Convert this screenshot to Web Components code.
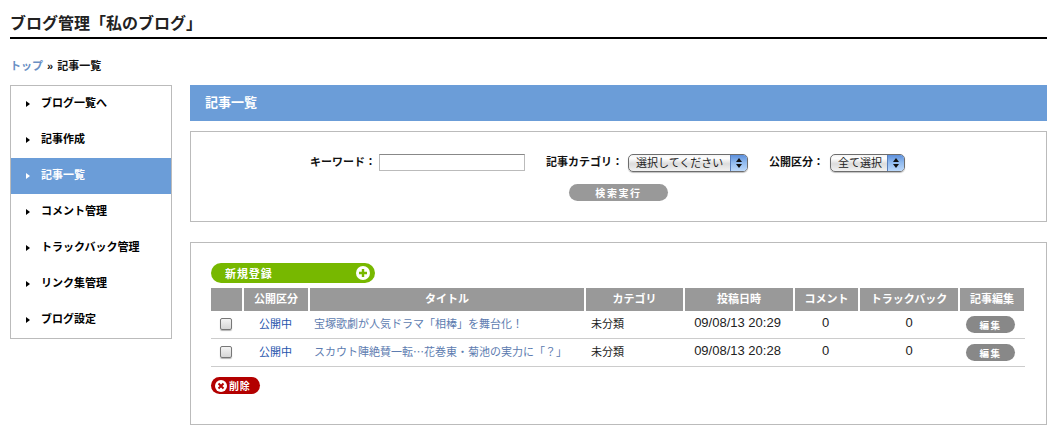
<!DOCTYPE html>
<html lang="ja">
<head>
<meta charset="utf-8">
<title>ブログ管理</title>
<style>
  html, body { margin: 0; padding: 0; background: #fff; }
  body {
    font-family: "Liberation Sans", "Noto Sans CJK JP", sans-serif;
    font-size: 11px;
    color: #111;
  }
</style>
</head>
<body>
<blog-page>
  <page-title slot="title">ブログ管理「私のブログ」</page-title>
  <bread-crumbs slot="crumbs" current="記事一覧"><a>トップ</a></bread-crumbs>
  <side-menu slot="menu">
    <menu-item>ブログ一覧へ</menu-item>
    <menu-item>記事作成</menu-item>
    <menu-item active>記事一覧</menu-item>
    <menu-item>コメント管理</menu-item>
    <menu-item>トラックバック管理</menu-item>
    <menu-item>リンク集管理</menu-item>
    <menu-item>ブログ設定</menu-item>
  </side-menu>
  <section-head>記事一覧</section-head>
  <search-panel></search-panel>
  <article-panel>
    <article-row status="公開中" category="未分類" date="09/08/13 20:29">宝塚歌劇が人気ドラマ「相棒」を舞台化！</article-row>
    <article-row status="公開中" category="未分類" date="09/08/13 20:28">スカウト陣絶賛一転…花巻東・菊池の実力に「？」</article-row>
  </article-panel>
</blog-page>

<script>
  function define(name, css, html) {
    customElements.define(name, class extends HTMLElement {
      constructor() {
        super();
        this.attachShadow({ mode: 'open' }).innerHTML = `<style>:host,*{box-sizing:border-box}${css}</style>${html(this)}`;
      }
    });
  }

  const COLS = '33px 66px 276px 99px 110px 65px 100px 65px';

  define('blog-page', `
    :host { display: block; width: 1057px; padding: 0 10px; }
    .body { display: flex; gap: 18px; margin-top: 12px; align-items: flex-start; }
    .main { flex: 1; min-width: 0; }
  `, () => `
    <slot name="title"></slot>
    <slot name="crumbs"></slot>
    <div class="body">
      <slot name="menu"></slot>
      <div class="main"><slot></slot></div>
    </div>
  `);

  define('page-title', `
    :host {
      display: block; height: 39px; padding-top: 14px;
      border-bottom: 2px solid #000;
      font-size: 16px; font-weight: bold; line-height: 20px; color: #222;
    }
  `, () => `<slot></slot>`);

  define('bread-crumbs', `
    :host { display: block; margin-top: 20px; line-height: 14px; font-weight: bold; height: 14px; }
    ::slotted(a) { color: #6a8fc4; }
    span { margin: 0 1px; }
  `, el => `<slot></slot> <span>»</span> ${el.getAttribute('current')}`);

  define('side-menu', `
    :host { display: block; flex: 0 0 162px; width: 162px; border: 1px solid #bbb; background: #fff; }
  `, () => `<slot></slot>`);

  define('menu-item', `
    :host {
      display: flex; align-items: center; height: 36px; padding-left: 15px;
      font-weight: bold; color: #000;
    }
    :host([active]) { background: #6b9dd8; color: #fff; }
    i {
      width: 0; height: 0; margin-right: 11px;
      border-left: 4px solid currentColor;
      border-top: 3px solid transparent; border-bottom: 3px solid transparent;
    }
    span { padding-bottom: 4px; }
  `, () => `<i></i><span><slot></slot></span>`);

  define('section-head', `
    :host {
      display: flex; align-items: center; height: 36px; padding: 0 0 4px 15px;
      background: #6b9dd8; color: #fff; font-size: 13px; font-weight: bold;
    }
  `, () => `<slot></slot>`);

  define('aqua-select', `
    :host {
      display: inline-flex; height: 18px; border: 1px solid #6d6d6d; border-radius: 5px;
      background: linear-gradient(#f4f4f4 0, #fff 20%, #dcdcdc 55%, #f2f2f2 100%);
      box-shadow: 0 1px 1px rgba(0,0,0,.25);
      overflow: hidden; color: #222; line-height: 16px;
    }
    span { flex: 1; padding-left: 7px; white-space: nowrap; }
    b {
      flex: 0 0 17px; display: flex; flex-direction: column; align-items: center; justify-content: center; gap: 2px;
      background: linear-gradient(#5c8fdc 0, #8fb9ee 45%, #bcd9fb 100%);
      border-left: 1px solid #5a7fbb;
    }
    b i { width: 0; height: 0; border-left: 3px solid transparent; border-right: 3px solid transparent; }
    b i:first-child { border-bottom: 4px solid #111; }
    b i:last-child { border-top: 4px solid #111; }
  `, () => `<span><slot></slot></span><b><i></i><i></i></b>`);

  define('pill-button', `
    :host {
      display: flex; align-items: center; justify-content: center;
      border-radius: 10px; background: var(--bg, #999); color: #fff;
      font-size: 10px; font-weight: bold; letter-spacing: 1.6px; white-space: nowrap;
    }
  `, () => `<slot></slot>`);

  define('search-panel', `
    :host { display: block; height: 91px; margin-top: 10px; border: 1px solid #bbb; padding-top: 22px; }
    .row { display: flex; align-items: flex-start; padding-left: 119px; font-weight: bold; line-height: 16px; }
    input {
      width: 146px; height: 17px; margin: 0 21px 0 3px; padding: 0;
      border: 1px solid #bbb; border-top-color: #888; background: #fff; outline: 0;
    }
    .cat { width: 120px; margin: 0 21px 0 5px; font-weight: normal; }
    .pub { width: 75px; margin-left: 6px; font-weight: normal; }
    pill-button { width: 99px; height: 17px; margin: 12px 0 0 378px; }
  `, () => `
    <div class="row">
      <span>キーワード：</span><input type="text">
      <span>記事カテゴリ：</span><aqua-select class="cat">選択してください</aqua-select>
      <span>公開区分：</span><aqua-select class="pub">全て選択</aqua-select>
    </div>
    <pill-button>検索実行</pill-button>
  `);

  define('article-panel', `
    :host { display: block; height: 183px; margin-top: 20px; border: 1px solid #bbb; padding: 20px 21px 0 20px; }
    .new {
      display: flex; align-items: center; justify-content: space-between;
      width: 164px; height: 20px; padding: 0 5px 0 14px; border-radius: 10px;
      background: #77b800; color: #fff; font-size: 11px; font-weight: bold; letter-spacing: .9px;
    }
    .new svg, .del svg { display: block; }
    .head {
      display: grid; grid-template-columns: ${COLS}; height: 23px; margin-top: 5px;
      line-height: 23px; font-weight: bold; color: #fff; text-align: center;
    }
    .head div { background: #999; margin-right: 2px; white-space: nowrap; }
    .head div:last-child { margin-right: 1px; }
    .del {
      display: flex; align-items: center; gap: 2px; width: 49px; height: 17px; margin-top: 10px; padding-left: 4px;
      border-radius: 9px; background: #b30000; color: #fff; font-size: 10px; font-weight: bold; letter-spacing: .8px;
    }
  `, () => `
    <div class="new">新規登録
      <svg width="14" height="14" viewBox="0 0 14 14"><circle cx="7" cy="7" r="7" fill="#fff"/><path d="M7 3v8M3 7h8" stroke="#77b800" stroke-width="2.4"/></svg>
    </div>
    <div class="head">
      <div></div><div>公開区分</div><div>タイトル</div><div>カテゴリ</div><div>投稿日時</div><div>コメント</div><div>トラックバック</div><div>記事編集</div>
    </div>
    <slot></slot>
    <div class="del">
      <svg width="12" height="12" viewBox="0 0 12 12"><circle cx="6" cy="6" r="6" fill="#fff"/><path d="M3.5 3.5l5 5M8.5 3.5l-5 5" stroke="#b30000" stroke-width="2"/></svg>削除
    </div>
  `);

  define('article-row', `
    :host { display: block; border-bottom: 1px solid #ccc; height: 28px; }
    .r { display: grid; grid-template-columns: ${COLS}; height: 27px; align-items: center; color: #222; }
    .c { text-align: center; padding-bottom: 4px; }
    .box {
      display: block; width: 12px; height: 12px; margin: 0 0 1px 9px; border: 1px solid #777; border-radius: 2px;
      background: linear-gradient(#f4f4f4, #d6d6d6); box-shadow: 0 1px 1px rgba(0,0,0,.3);
    }
    .st { color: #1f55ad; padding-right: 3px; }
    .ti { padding: 0 0 4px 4px; color: #5d7cb0; white-space: nowrap; font-family: "Noto Sans CJK JP", sans-serif; }
    .ca { padding: 0 0 4px 5px; }
    .da, .n { font-size: 13px; }
    .da { padding-right: 5px; }
    .n { padding-right: 4px; }
    .n + .n { padding-right: 2px; }
    pill-button { width: 49px; height: 17px; margin-left: 6px; background: #888; font-size: 9.5px; }
  `, el => `
    <div class="r">
      <span class="box"></span>
      <span class="c st">${el.getAttribute('status')}</span>
      <span class="ti"><slot></slot></span>
      <span class="ca">${el.getAttribute('category')}</span>
      <span class="c da">${el.getAttribute('date')}</span>
      <span class="c n">0</span>
      <span class="c n">0</span>
      <pill-button>編集</pill-button>
    </div>
  `);
</script>
</body>
</html>
